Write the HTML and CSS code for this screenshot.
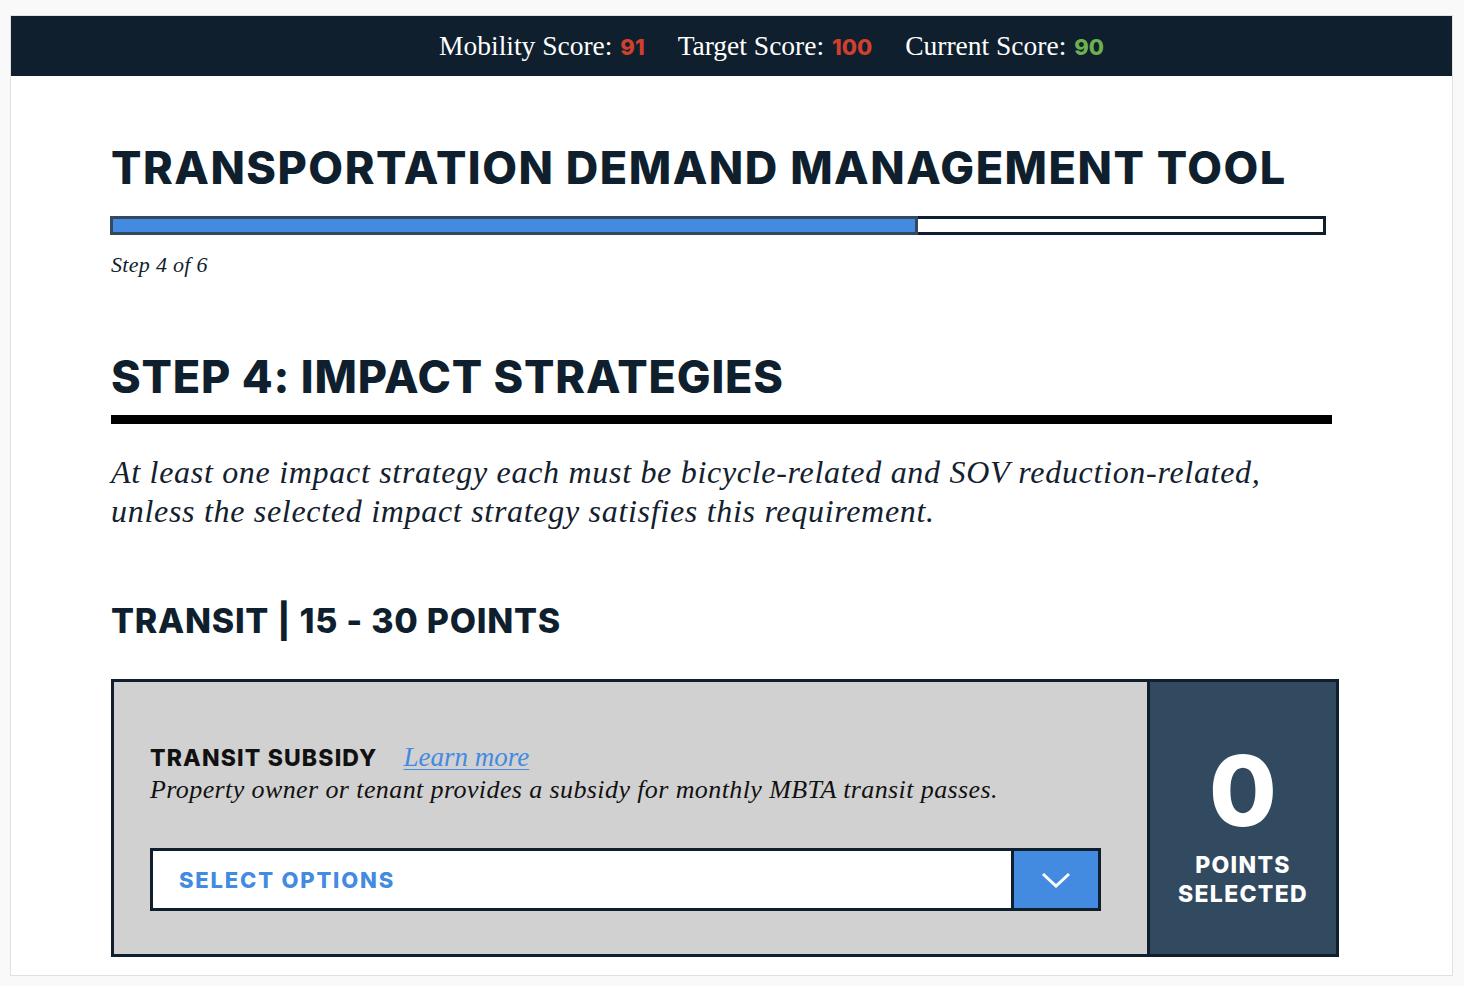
FILE: index.html
```html
<!DOCTYPE html>
<html lang="en">
<head>
<meta charset="utf-8">
<title>Transportation Demand Management Tool</title>
<link rel="stylesheet" href="styles.css">
</head>
<body>
<div class="page">
  <header class="scorebar">
    <span class="score">Mobility Score: <b class="num red">91</b></span>
    <span class="score">Target Score: <b class="num red">100</b></span>
    <span class="score">Current Score: <b class="num green">90</b></span>
  </header>
  <main class="content">
    <h1 class="title">TRANSPORTATION DEMAND MANAGEMENT TOOL</h1>
    <div class="progress">
      <div class="progress-fill" style="width:808px"></div>
      <div class="progress-rest"></div>
    </div>
    <p class="step-count">Step 4 of 6</p>
    <h2 class="step-title">STEP 4: IMPACT STRATEGIES</h2>
    <p class="intro">At least one impact strategy each must be bicycle-related and SOV reduction-related,<br>unless the selected impact strategy satisfies this requirement.</p>
    <h3 class="category">TRANSIT | 15 - 30 POINTS</h3>
    <section class="card">
      <div class="card-main">
        <div class="card-head">
          <span class="strategy-name">TRANSIT SUBSIDY</span>
          <a class="learn" href="#">Learn more</a>
        </div>
        <p class="strategy-desc">Property owner or tenant provides a subsidy for monthly MBTA transit passes.</p>
        <div class="select">
          <span class="select-label">SELECT OPTIONS</span>
          <span class="select-btn">
            <svg class="chevron" width="30" height="16" viewBox="0 0 30 16"><polyline points="2,2 15,14 28,2" fill="none" stroke="#ffffff" stroke-width="3"/></svg>
          </span>
        </div>
      </div>
      <div class="points-panel">
        <div class="points-num">0</div>
        <div class="points-label">POINTS<br>SELECTED</div>
      </div>
    </section>
  </main>
</div>
</body>
</html>
```
FILE: styles.css
```css
body {
  margin: 0;
  background: #f9f9f9;
}

.page {
  margin: 15px 11px 0 10px;
  background: #ffffff;
  border: 1px solid #e1e1e1;
  padding-bottom: 18px;
}

.scorebar {
  height: 60px;
  background: #0f1f2e;
  display: flex;
  justify-content: center;
  align-items: center;
  gap: 33px;
  padding-left: 80px;
  color: #ffffff;
  font-family: "Liberation Serif", serif;
  font-size: 27.5px;
}

.num {
  font-family: Inter, sans-serif;
  font-weight: 800;
  font-size: 22px;
  margin-left: 1px;
}

.red { color: #d0402e; }
.green { color: #6db04f; }

.content {
  padding: 0 120px 0 100px;
  color: #0f1f2e;
}

.title,
.step-title {
  margin: 65px 0 0;
  font-family: Inter, sans-serif;
  font-weight: 800;
  font-size: 45px;
  line-height: 54px;
  letter-spacing: 1.5px;
}

.progress {
  margin: 21px 0 0 -1px;
  width: 1216px;
  height: 19px;
  display: flex;
}

.progress-fill {
  box-sizing: border-box;
  height: 100%;
  background: #438be0;
  border: 3px solid #35495e;
}

.progress-rest {
  flex: 1;
  box-sizing: border-box;
  height: 100%;
  background: #ffffff;
  border: 3px solid #0f1f2e;
  border-left: none;
}

.step-count {
  margin: 18px 0 0;
  font-family: "Liberation Serif", serif;
  font-style: italic;
  font-size: 22px;
  line-height: 24px;
  letter-spacing: 0.3px;
}

.step-title {
  margin-top: 73px;
  padding-bottom: 11px;
  border-bottom: 9px solid #000000;
  letter-spacing: 0.8px;
}

.intro {
  margin: 29px 0 0;
  font-family: "Liberation Serif", serif;
  font-style: italic;
  font-size: 32px;
  line-height: 39px;
  letter-spacing: 0.7px;
  color: #13202d;
}

.category {
  margin: 69px 0 0;
  font-family: Inter, sans-serif;
  font-weight: 800;
  font-size: 34px;
  line-height: 42px;
  letter-spacing: 0.75px;
}

.card {
  margin-top: 37px;
  width: 1228px;
  height: 278px;
  box-sizing: border-box;
  border: 3px solid #0f1f2e;
  display: flex;
}

.card-main {
  flex: 1;
  background: #d1d1d1;
  padding: 61px 46px 0 36px;
}

.card-head {
  display: flex;
  align-items: baseline;
  gap: 26px;
}

.strategy-name {
  font-family: Inter, sans-serif;
  font-weight: 800;
  font-size: 23px;
  line-height: 28px;
  letter-spacing: 1.15px;
  color: #111111;
}

.learn {
  font-family: "Liberation Serif", serif;
  font-style: italic;
  font-size: 27px;
  line-height: 28px;
  color: #438be0;
  text-decoration: underline;
  text-decoration-thickness: 1px;
  text-underline-offset: 3px;
}

.strategy-desc {
  margin: 3px 0 0;
  font-family: "Liberation Serif", serif;
  font-style: italic;
  font-size: 26px;
  line-height: 30px;
  letter-spacing: 0.4px;
  color: #111111;
}

.select {
  margin-top: 43px;
  height: 63px;
  box-sizing: border-box;
  border: 3px solid #0f1f2e;
  background: #ffffff;
  display: flex;
}

.select-label {
  flex: 1;
  display: flex;
  align-items: center;
  padding-left: 26px;
  font-family: Inter, sans-serif;
  font-weight: 800;
  font-size: 22px;
  letter-spacing: 1.8px;
  color: #438be0;
}

.select-btn {
  width: 84px;
  border-left: 3px solid #0f1f2e;
  background: #438be0;
  display: flex;
  align-items: center;
  justify-content: center;
}

.chevron {
  display: block;
}

.points-panel {
  width: 189px;
  border-left: 3px solid #0f1f2e;
  background: #324a5f;
  color: #ffffff;
  display: flex;
  flex-direction: column;
  align-items: center;
  justify-content: center;
  padding-top: 14px;
  box-sizing: border-box;
  font-family: Inter, sans-serif;
  font-weight: 800;
}

.points-num {
  font-size: 98px;
  line-height: 100px;
}

.points-label {
  margin-top: 10px;
  font-size: 23px;
  line-height: 29px;
  letter-spacing: 1.3px;
  text-align: center;
}
```
